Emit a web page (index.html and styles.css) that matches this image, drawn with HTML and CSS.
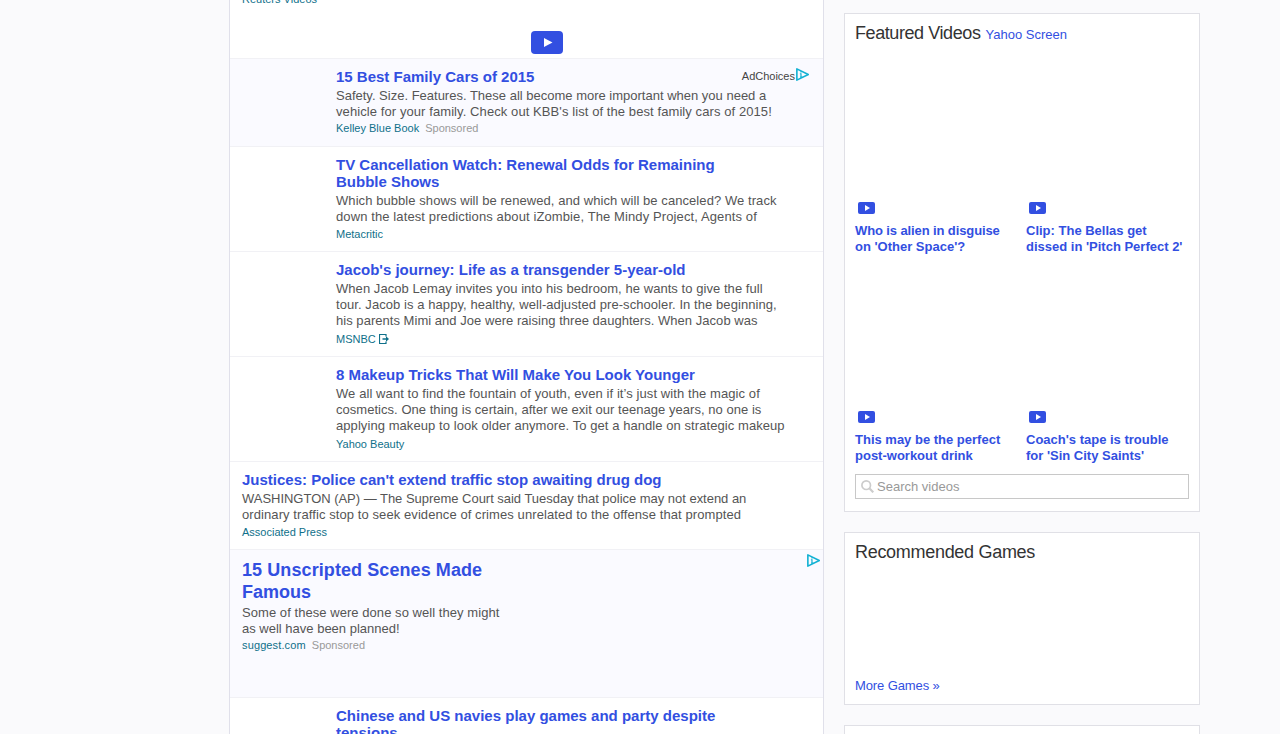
FILE: index.html
```
<!DOCTYPE html>
<html lang="en">
<head>
<meta charset="utf-8">
<title>News</title>
<link rel="stylesheet" href="styles.css">
</head>
<body>
<svg class="defs" width="0" height="0">
  <symbol id="adchoices" viewBox="0 0 12 12"><path d="M.8 .8V11.2L11.3 6Z" fill="none" stroke="#12b1d3" stroke-width="1.5" stroke-linejoin="round"/><path d="M4.600 3v1.200M3.600 5.300h1V8.500M3.800 8.400H6" fill="none" stroke="#12b1d3" stroke-width="1.100"/></symbol>
  <symbol id="play" viewBox="0 0 17 12"><rect width="17" height="12" rx="2" fill="#324fe1"/><path d="M7 3v6l5-3z" fill="#fff"/></symbol>
</svg>
<div class="page">
  <main class="stream">
    <article class="item item-video">
      <div class="source"><span>Reuters Videos</span></div>
      <svg class="play-large" viewBox="0 0 32 23"><rect width="32" height="23" rx="4" fill="#324fe1"/><path d="M13 7v9l8.500-4.500z" fill="#fff"/></svg>
    </article>
    <article class="item item-short sponsored thumb">
      <h3><span>15 Best Family Cars of 2015</span></h3>
      <p><span>Safety. Size. Features. These all become more important when you need a</span><span class="track-4">vehicle for your family. Check out KBB's list of the best family cars of 2015!</span></p>
      <div class="source"><span>Kelley Blue Book</span><em>Sponsored</em></div>
      <div class="ad-label"><span>AdChoices</span><svg class="ad-icon"><use href="#adchoices"/></svg></div>
    </article>
    <article class="item thumb two-line">
      <h3><span>TV Cancellation Watch: Renewal Odds for Remaining</span><span>Bubble Shows</span></h3>
      <p><span class="track-3">Which bubble shows will be renewed, and which will be canceled? We track</span><span class="track-5">down the latest predictions about iZombie, The Mindy Project, Agents of</span></p>
      <div class="source"><span>Metacritic</span></div>
    </article>
    <article class="item thumb tall">
      <h3><span>Jacob's journey: Life as a transgender 5-year-old</span></h3>
      <p><span class="track-2">When Jacob Lemay invites you into his bedroom, he wants to give the full</span><span class="track-3">tour. Jacob is a happy, healthy, well-adjusted pre-schooler. In the beginning,</span><span class="track-1">his parents Mimi and Joe were raising three daughters. When Jacob was</span></p>
      <div class="source"><span>MSNBC</span><svg class="exit" viewBox="0 0 10 10"><path d="M7 2.500V.5H.5v9H7v-2" fill="none" stroke="#0f708a" stroke-width="1.200"/><path d="M3.500 4.300H7V2.300L10 5 7 7.700v-2H3.500z" fill="#0f708a"/></svg></div>
    </article>
    <article class="item thumb tall">
      <h3><span>8 Makeup Tricks That Will Make You Look Younger</span></h3>
      <p><span class="track-4">We all want to find the fountain of youth, even if it’s just with the magic of</span><span class="track-1">cosmetics. One thing is certain, after we exit our teenage years, no one is</span><span class="track-3">applying makeup to look older anymore. To get a handle on strategic makeup</span></p>
      <div class="source"><span>Yahoo Beauty</span></div>
    </article>
    <article class="item item-short wide">
      <h3><span>Justices: Police can't extend traffic stop awaiting drug dog</span></h3>
      <p><span class="tighter">WASHINGTON (AP) — The Supreme Court said Tuesday that police may not extend an</span><span class="track-4">ordinary traffic stop to seek evidence of crimes unrelated to the offense that prompted</span></p>
      <div class="source"><span>Associated Press</span></div>
    </article>
    <article class="item item-ad sponsored">
      <h3><span class="track-4">15 Unscripted Scenes Made</span><span>Famous</span></h3>
      <p><span class="track-2">Some of these were done so well they might</span><span>as well have been planned!</span></p>
      <div class="source"><span class="track-6">suggest.com</span><em>Sponsored</em></div>
      <div class="ad-label ad-corner"><svg class="ad-icon"><use href="#adchoices"/></svg></div>
    </article>
    <article class="item thumb two-line">
      <h3><span>Chinese and US navies play games and party despite</span><span>tensions</span></h3>
    </article>
  </main>
  <aside class="rail">
    <section class="card videos">
      <h2><span>Featured Videos</span> <a>Yahoo Screen</a></h2>
      <div class="grid">
        <div class="video"><svg class="play"><use href="#play"/></svg><h4><span class="tight">Who is alien in disguise</span><span>on 'Other Space'?</span></h4></div>
        <div class="video"><svg class="play"><use href="#play"/></svg><h4><span>Clip: The Bellas get</span><span>dissed in 'Pitch Perfect 2'</span></h4></div>
        <div class="video"><svg class="play"><use href="#play"/></svg><h4><span>This may be the perfect</span><span>post-workout drink</span></h4></div>
        <div class="video"><svg class="play"><use href="#play"/></svg><h4><span>Coach's tape is trouble</span><span>for 'Sin City Saints'</span></h4></div>
      </div>
      <div class="search"><svg class="glass" viewBox="0 0 13 13"><circle cx="5.200" cy="5.200" r="4.300" fill="none" stroke="#ccc" stroke-width="1.700"/><path d="M8.300 8.300l4 4" stroke="#ccc" stroke-width="2.200"/></svg><span>Search videos</span></div>
    </section>
    <section class="card games">
      <h2><span>Recommended Games</span></h2>
      <a class="tight">More Games »</a>
    </section>
    <section class="card next"></section>
  </aside>
</div>
</body>
</html>
```
FILE: styles.css
```
* { box-sizing: border-box; }
body { margin: 0; background: #fafafc; font-family: "Liberation Sans", Arial, sans-serif; overflow: hidden; }
.defs { position: absolute; }
h2, h3, h4, p { margin: 0; }
.page { display: flex; gap: 20px; height: 734px; padding-left: 229px; overflow: hidden; }
.stream { width: 595px; border: solid #e0e0ea; border-width: 0 1px; background: #fff; flex: none; }
.item { position: relative; height: 105px; padding: 9px 12px 0; border-top: 1px solid #f1f1f5; overflow: hidden; }
.item-short { height: 88px; }
.item-ad { height: 148px; }
.thumb { padding-left: 106px; }
.sponsored { background: #fafaff; }
.item-video { display: flex; flex-direction: column; height: 58px; padding-top: 0; border: 0; }
.item-video .source { margin-top: -8px; }
.play-large { width: 32px; height: 23px; margin: 25px 0 0 289px; flex: none; }
h3 span, h4 span, p span { display: block; width: max-content; white-space: nowrap; }
h3 { font-size: 15px; line-height: 17px; color: #324fe1; }
p { margin-top: 3px; font-size: 13px; line-height: 16px; color: #555; }
.item-ad h3 { font-size: 18px; line-height: 22px; }
.item-ad p { margin-top: 2px; }
.source { display: flex; align-items: center; margin-top: 1px; height: 14px; font-size: 11px; line-height: 14px; color: #0f708a; }
.tall .source { margin-top: 3px; }
.two-line .source, .wide .source { margin-top: 2px; }
.source em { margin-left: 6px; font-style: normal; color: #999; }
.exit { width: 10px; height: 10px; margin-left: 3px; }
.ad-label { position: absolute; top: 9px; right: 14px; display: flex; gap: 1px; font-size: 11px; line-height: 16px; color: #444; }
.ad-icon { width: 13px; height: 13px; }
.ad-corner { top: 4px; right: 3px; }
.track-1 { letter-spacing: .035px; }
.track-2 { letter-spacing: .055px; }
.track-3 { letter-spacing: .07px; }
.track-4 { letter-spacing: .085px; }
.track-5 { letter-spacing: .11px; }
.track-6 { letter-spacing: .13px; }
.tight { letter-spacing: -.11px; }
.tighter { letter-spacing: -.025px; }
.rail { width: 356px; padding-top: 13px; display: flex; flex-direction: column; gap: 20px; flex: none; }
.card { flex: none; padding: 8px 10px 0; border: 1px solid #e0e0e6; background: #fff; }
.videos { height: 499px; }
.games { height: 173px; display: flex; flex-direction: column; justify-content: space-between; padding-bottom: 10px; }
.next { height: 40px; }
h2 { font-size: 18px; font-weight: 400; line-height: 22px; color: #333; white-space: nowrap; }
.videos h2 span { letter-spacing: -.42px; }
.games h2 span { letter-spacing: -.3px; }
a { font-size: 13px; line-height: 16px; color: #324fe1; }
.grid { display: grid; grid-template-columns: 171px 163px; grid-template-rows: 211px 209px; margin-bottom: 10px; }
.video { display: flex; flex-direction: column; justify-content: flex-end; }
.play { width: 17px; height: 12px; margin: 0 0 9px 3px; }
h4 { font-size: 13px; line-height: 16px; color: #324fe1; }
.search { display: flex; align-items: center; gap: 3px; width: 334px; height: 25px; padding-left: 5px; border: 1px solid #c8c8c8; font-size: 13px; color: #999; }
.glass { width: 13px; height: 13px; }
```
